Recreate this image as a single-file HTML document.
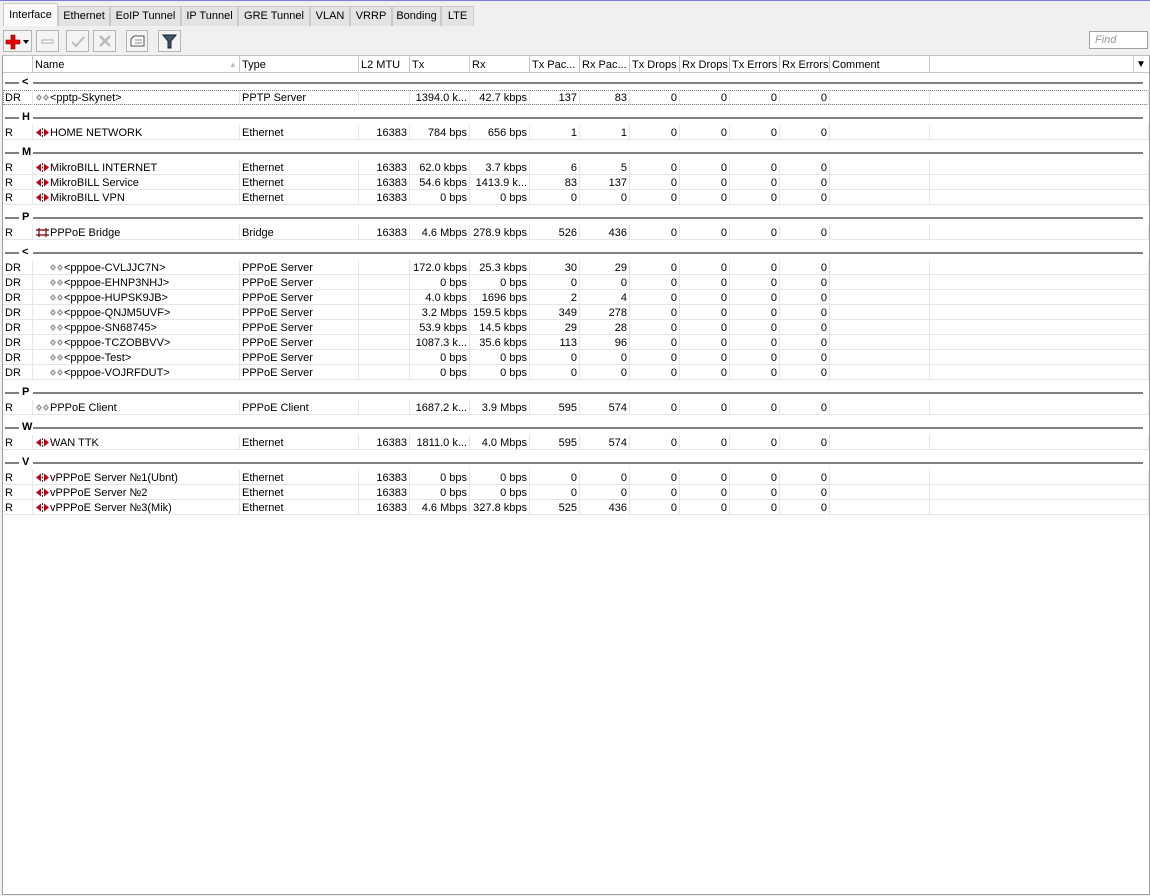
<!DOCTYPE html>
<html><head><meta charset="utf-8"><style>
*{box-sizing:border-box;margin:0;padding:0}
body{width:1150px;height:896px;background:#f0f0f0;font-family:"Liberation Sans",sans-serif;font-size:11px;color:#000;position:relative;overflow:hidden}
.top{position:absolute;left:0;top:0;width:1150px;height:1px;background:#7c7ce0}
.tab{position:absolute;top:6px;height:20px;background:#e3e3e3;border:1px solid #c8c8c8;border-bottom:none;line-height:19px;text-align:center;font-size:11px}
.tab.act{top:3px;height:23px;background:#fafafa;line-height:22px}
.btn{position:absolute;top:30px;height:22px;border:1px solid #b4b4b4;background:#f4f4f4}
.find{position:absolute;left:1089px;top:31px;width:59px;height:18px;border:1px solid #a0a0a0;background:#fff;color:#999;font-style:italic;padding:2px 5px;font-size:11px}
.tbl{position:absolute;left:2px;top:55px;width:1148px;height:840px;background:#fff;border:1px solid #a0a0a0;border-top:1px solid #c0c0c0}
.hdr{position:absolute;left:0;top:0;height:17px;width:1146px;border-bottom:1px solid #c8c8c8;background:#fff}
.hdr div{position:absolute;top:0;height:16px;border-right:1px solid #c8c8c8;padding:3px 2px 0;white-space:nowrap;overflow:hidden}
.row{position:absolute;left:0;height:15px;width:1146px;border-bottom:1px solid #e6e6e6}
.row div{position:absolute;top:0;height:15px;border-right:1px solid #e6e6e6;padding:1px 2px;white-space:nowrap;overflow:hidden;line-height:14px}
.r{text-align:right}
.grp{position:absolute;left:0;width:1146px;height:12px}
.grp .l1{position:absolute;left:2px;top:5px;width:14px;height:2px;background:#808080}
.grp .l2{position:absolute;left:30px;top:5px;width:1110px;height:2px;background:#808080}
.grp b{position:absolute;left:19px;top:-1px;font-size:11px}
svg{vertical-align:-2px}
</style></head><body>
<div class="top"></div>
<div class="tab act" style="left:3px;width:55px">Interface</div>
<div class="tab" style="left:58px;width:52px">Ethernet</div>
<div class="tab" style="left:110px;width:71px">EoIP Tunnel</div>
<div class="tab" style="left:181px;width:57px">IP Tunnel</div>
<div class="tab" style="left:238px;width:72px">GRE Tunnel</div>
<div class="tab" style="left:310px;width:40px">VLAN</div>
<div class="tab" style="left:350px;width:42px">VRRP</div>
<div class="tab" style="left:392px;width:49px">Bonding</div>
<div class="tab" style="left:441px;width:33px">LTE</div>

<div class="btn" style="left:3px;width:29px"><svg width="27" height="20" viewBox="0 0 27 20"><path d="M7 4h4v5h5v4h-5v5h-4v-5h-5v-4h5z" fill="#e00" stroke="#600" stroke-width=".6"/><path d="M19 9h6l-3 4z" fill="#000"/></svg></div>
<div class="btn" style="left:36px;width:23px"><svg width="21" height="20"><rect x="5" y="9" width="11" height="3" fill="#fff" stroke="#aaa"/></svg></div>
<div class="btn" style="left:66px;width:23px"><svg width="21" height="20"><path d="M5 11l4 4 8-9" fill="none" stroke="#bbb" stroke-width="2"/></svg></div>
<div class="btn" style="left:93px;width:23px"><svg width="21" height="20"><path d="M6 5l10 10M16 5l-10 10" stroke="#bbb" stroke-width="2.5"/></svg></div>
<div class="btn" style="left:126px;width:22px"><svg width="20" height="20"><path d="M4 8l3-3h10v10h-13z" fill="#fff" stroke="#555"/><path d="M8 9h7M8 12h7" stroke="#888"/></svg></div>
<div class="btn" style="left:158px;width:23px"><svg width="21" height="20"><path d="M4 4h13l-5 6v7h-3v-7z" fill="#456" stroke="#123"/></svg></div>
<div class="find">Find</div>

<div class="tbl">
<div class="hdr">
<div style="left:0;width:30px"></div>
<div style="left:30px;width:207px">Name<span style="position:absolute;left:196px;color:#bbb;font-size:8px;top:4px">▲</span></div>
<div style="left:237px;width:119px">Type</div>
<div style="left:356px;width:51px">L2 MTU</div>
<div style="left:407px;width:60px">Tx</div>
<div style="left:467px;width:60px">Rx</div>
<div style="left:527px;width:50px">Tx Pac...</div>
<div style="left:577px;width:50px">Rx Pac...</div>
<div style="left:627px;width:50px">Tx Drops</div>
<div style="left:677px;width:50px">Rx Drops</div>
<div style="left:727px;width:50px">Tx Errors</div>
<div style="left:777px;width:50px">Rx Errors</div>
<div style="left:827px;width:100px">Comment</div>
<div style="left:927px;width:204px"></div>
<div style="left:1131px;width:15px;border:none;font-size:10px">▼</div>
</div>
<div id="body"></div>
</div>
<script>
var eth='<svg width="15" height="11" viewBox="0 0 15 11"><path d="M1 5.5l5-4v8z" fill="#c00010"/><path d="M14 5.5l-5-4v8z" fill="#c00010"/><path d="M7.5 1v2M7.5 4.5v2M7.5 8v2" stroke="#333"/></svg>';
var ppp='<svg width="15" height="11" viewBox="0 0 15 11"><path d="M4 2l3 3.5-3 3.5-3-3.5z" fill="#999"/><path d="M11 2l3 3.5-3 3.5-3-3.5z" fill="#999"/><path d="M4 4l1 1.5-1 1.5-1-1.5zM11 4l1 1.5-1 1.5-1-1.5z" fill="#fff"/></svg>';
var br='<svg width="15" height="11" viewBox="0 0 15 11"><path d="M1 8h13M1 3h13M4 1v9M11 1v9" stroke="#700" stroke-width="1.2"/></svg>';
var G=[['&lt;',82],['H',117],['M',152],['P',217],['&lt;',252],['P',392],['W',427],['V',462]];
var R=[
[89,'DR',ppp,'&lt;pptp-Skynet&gt;','PPTP Server','','1394.0 k...','42.7 kbps','137','83',0],
[124,'R',eth,'HOME NETWORK','Ethernet','16383','784 bps','656 bps','1','1',0],
[159,'R',eth,'MikroBILL INTERNET','Ethernet','16383','62.0 kbps','3.7 kbps','6','5',0],
[174,'R',eth,'MikroBILL Service','Ethernet','16383','54.6 kbps','1413.9 k...','83','137',0],
[189,'R',eth,'MikroBILL VPN','Ethernet','16383','0 bps','0 bps','0','0',0],
[224,'R',br,'PPPoE Bridge','Bridge','16383','4.6 Mbps','278.9 kbps','526','436',0],
[259,'DR',ppp,'&lt;pppoe-CVLJJC7N&gt;','PPPoE Server','','172.0 kbps','25.3 kbps','30','29',1],
[274,'DR',ppp,'&lt;pppoe-EHNP3NHJ&gt;','PPPoE Server','','0 bps','0 bps','0','0',1],
[289,'DR',ppp,'&lt;pppoe-HUPSK9JB&gt;','PPPoE Server','','4.0 kbps','1696 bps','2','4',1],
[304,'DR',ppp,'&lt;pppoe-QNJM5UVF&gt;','PPPoE Server','','3.2 Mbps','159.5 kbps','349','278',1],
[319,'DR',ppp,'&lt;pppoe-SN68745&gt;','PPPoE Server','','53.9 kbps','14.5 kbps','29','28',1],
[334,'DR',ppp,'&lt;pppoe-TCZOBBVV&gt;','PPPoE Server','','1087.3 k...','35.6 kbps','113','96',1],
[349,'DR',ppp,'&lt;pppoe-Test&gt;','PPPoE Server','','0 bps','0 bps','0','0',1],
[364,'DR',ppp,'&lt;pppoe-VOJRFDUT&gt;','PPPoE Server','','0 bps','0 bps','0','0',1],
[399,'R',ppp,'PPPoE Client','PPPoE Client','','1687.2 k...','3.9 Mbps','595','574',0],
[434,'R',eth,'WAN TTK','Ethernet','16383','1811.0 k...','4.0 Mbps','595','574',0],
[469,'R',eth,'vPPPoE Server №1(Ubnt)','Ethernet','16383','0 bps','0 bps','0','0',0],
[484,'R',eth,'vPPPoE Server №2','Ethernet','16383','0 bps','0 bps','0','0',0],
[499,'R',eth,'vPPPoE Server №3(Mik)','Ethernet','16383','4.6 Mbps','327.8 kbps','525','436',0]];
var h='';
G.forEach(function(g){h+='<div class="grp" style="top:'+(g[1]-56-5)+'px"><div class="l1"></div><b>'+g[0]+'</b><div class="l2"></div></div>';});
var cols=[[0,30],[30,207],[237,119],[356,51],[407,60],[467,60],[527,50],[577,50],[627,50],[677,50],[727,50],[777,50],[827,100],[927,219]];
R.forEach(function(r,i){
 var v=[r[1],(r[10]?'<span style="display:inline-block;width:14px"></span>':'')+r[2]+r[3],r[4],r[5],r[6],r[7],r[8],r[9],'0','0','0','0','',''];
 h+='<div class="row" style="top:'+(r[0]-55)+'px'+(i==0?';outline:1px dotted #888;outline-offset:-1px':'')+'">';
 cols.forEach(function(c,j){h+='<div class="'+(j>=3&&j<=11?'r':'')+'" style="left:'+c[0]+'px;width:'+c[1]+'px">'+v[j]+'</div>';});
 h+='</div>';
});
document.getElementById('body').innerHTML=h;
</script>
</body></html>
